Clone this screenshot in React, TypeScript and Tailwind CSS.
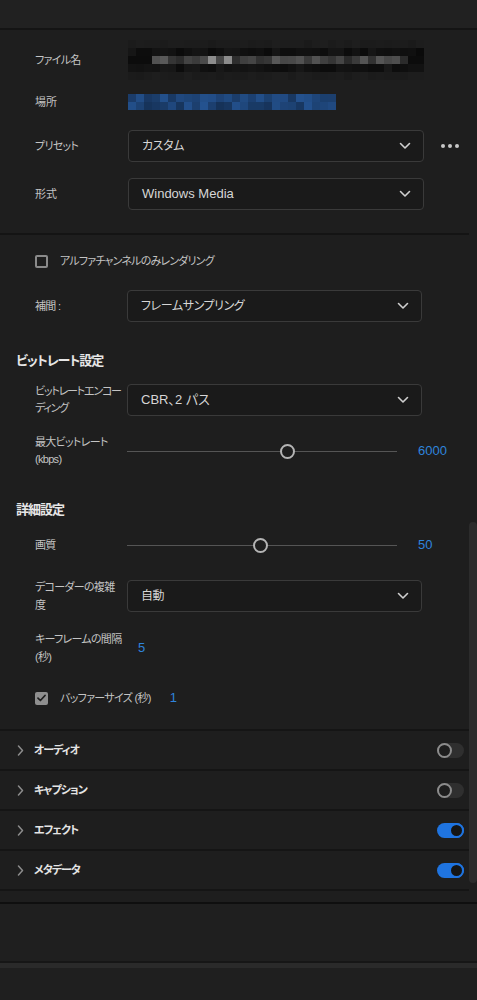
import React from "react";

const FONT = '"Liberation Sans", "Noto Sans CJK JP", sans-serif';

function noise(i: number) {
  const x = Math.sin(i * 12.9898 + 78.233) * 43758.5453;
  return x - Math.floor(x);
}

function gray(v: number) {
  const h = Math.max(0, Math.min(255, Math.round(v))).toString(16).padStart(2, "0");
  return `#${h}${h}${h}`;
}

// pixelated file name (blurred in the original)
const NAME_ROWS = [
  { base: 26, spread: 4 },
  { base: 10, spread: 12 },
  { base: 40, spread: 50 },
  { base: 12, spread: 12 },
  { base: 26, spread: 4 },
];

function NameMosaic() {
  return (
    <div className="flex flex-col w-[296px]">
      {NAME_ROWS.map((r, ri) => (
        <div key={ri} className="flex h-[8px]">
          {Array.from({ length: 37 }).map((_, ci) => {
            let v = r.base + noise(ri * 37 + ci) * r.spread;
            if (ri === 2 && (ci < 3 || ci > 34)) v = 12;
            if (ri === 2 && (ci === 10 || ci === 12)) v = 140;
            return <div key={ci} className="w-[8px] h-[8px]" style={{ background: gray(v) }} />;
          })}
        </div>
      ))}
    </div>
  );
}

function PathMosaic() {
  return (
    <div className="flex flex-col w-[208px]">
      {[0, 1].map((ri) => (
        <div key={ri} className="flex h-[8px]">
          {Array.from({ length: 26 }).map((_, ci) => {
            const n = noise(500 + ri * 26 + ci);
            const r = Math.round(22 + n * 14);
            const g = Math.round(50 + n * 32);
            const b = Math.round(88 + n * 55);
            return <div key={ci} className="w-[8px] h-[8px]" style={{ background: `rgb(${r},${g},${b})` }} />;
          })}
        </div>
      ))}
    </div>
  );
}

function ChevronDown() {
  return (
    <svg width="12" height="8" viewBox="0 0 12 8" fill="none">
      <path d="M1.5 1.5 6 6l4.5-4.5" stroke="#cfcfcf" strokeWidth="1.6" strokeLinecap="round" strokeLinejoin="round" />
    </svg>
  );
}

function ChevronRight() {
  return (
    <svg width="7" height="11" viewBox="0 0 7 11" fill="none">
      <path d="M1.5 1 5.5 5.5 1.5 10" stroke="#8c8c8c" strokeWidth="1.5" strokeLinecap="round" strokeLinejoin="round" />
    </svg>
  );
}

function Dropdown({ value, wide, jp }: { value: string; wide?: boolean; jp?: boolean }) {
  return (
    <div
      className={`flex items-center justify-between h-[32px] border border-[#3a3a3a] rounded-[4px] bg-[#1a1a1a] pl-[13px] pr-[12px] ${
        wide ? "w-[296px]" : "w-[295px]"
      }`}
    >
      <span className={`${jp ? "text-[12px] tracking-[-0.4px]" : "text-[13px]"} text-[#d6d6d6] whitespace-nowrap`}>
        {value}
      </span>
      <ChevronDown />
    </div>
  );
}

function Slider({ pct, value }: { pct: number; value: string }) {
  return (
    <div className="flex items-center">
      <div className="relative w-[270px] h-[16px] flex items-center">
        <div className="w-full h-[1px] bg-[#555555]" />
        <div
          className="absolute top-[1px] w-[15px] h-[15px] -ml-[7px] rounded-full border-2 border-[#b4b4b4] bg-[#1e1e1e]"
          style={{ left: `${pct}%` }}
        />
      </div>
      <span className="ml-[21px] text-[13px] text-[#2f84dc]">{value}</span>
    </div>
  );
}

function Checkbox({ checked }: { checked?: boolean }) {
  if (checked) {
    return (
      <div className="w-[13px] h-[13px] rounded-[2px] bg-[#8f8f8f] flex items-center justify-center">
        <svg width="9" height="8" viewBox="0 0 9 8" fill="none">
          <path d="M1 4.2 3.4 6.5 8 1.5" stroke="#1e1e1e" strokeWidth="1.7" strokeLinecap="round" strokeLinejoin="round" />
        </svg>
      </div>
    );
  }
  return <div className="w-[13px] h-[13px] rounded-[2px] border-2 border-[#8a8a8a]" />;
}

function Toggle({ on }: { on?: boolean }) {
  return on ? (
    <div className="w-[27px] h-[15px] rounded-full bg-[#1f74e0] flex items-center justify-end">
      <div className="w-[15px] h-[15px] rounded-full border-2 border-[#1f74e0] bg-[#151515]" />
    </div>
  ) : (
    <div className="w-[27px] h-[15px] rounded-full bg-[#2f2f2f] flex items-center">
      <div className="w-[15px] h-[15px] rounded-full border-2 border-[#8c8c8c] bg-[#1e1e1e]" />
    </div>
  );
}

function Label({ children, lh, tight }: { children: React.ReactNode; lh?: string; tight?: boolean }) {
  return (
    <div
      className={`pl-[35px] w-[127px] shrink-0 whitespace-nowrap text-[11px] ${
        tight ? "tracking-[-1.2px]" : "tracking-[-0.7px]"
      } text-[#c4c4c4] ${lh ?? "leading-[17px]"}`}
    >
      {children}
    </div>
  );
}

const ROWS = [
  { name: "オーディオ", on: false },
  { name: "キャプション", on: false },
  { name: "エフェクト", on: true },
  { name: "メタデータ", on: true },
];

export default function App() {
  return (
    <div
      className="w-[477px] h-[1000px] bg-[#1e1e1e] flex flex-col overflow-hidden"
      style={{ fontFamily: FONT, fontFeatureSettings: '"palt"' }}
    >
      <div className="h-[28px] bg-[#212121]" />
      <div className="h-[2px] bg-[#141414]" />

      <div className="flex h-[872px] overflow-hidden">
        <div className="w-[469px] flex flex-col">
          {/* output */}
          <div className="flex flex-col pt-[10px]">
            <div className="flex items-center h-[40px]">
              <div className="pl-[35px] w-[128px] text-[11px] tracking-[-0.7px] text-[#c4c4c4]">ファイル名</div>
              <NameMosaic />
            </div>
            <div className="flex items-center h-[20px] mt-[12px]">
              <div className="pl-[35px] w-[128px] text-[11px] text-[#c4c4c4]">場所</div>
              <PathMosaic />
            </div>
            <div className="flex items-center mt-[18px]">
              <div className="pl-[35px] w-[128px] text-[11px] tracking-[-0.7px] text-[#c4c4c4]">プリセット</div>
              <Dropdown value="カスタム" wide jp />
              <div className="ml-[17px] flex gap-[3px]">
                <div className="w-[4px] h-[4px] rounded-full bg-[#c8c8c8]" />
                <div className="w-[4px] h-[4px] rounded-full bg-[#c8c8c8]" />
                <div className="w-[4px] h-[4px] rounded-full bg-[#c8c8c8]" />
              </div>
            </div>
            <div className="flex items-center mt-[16px]">
              <div className="pl-[35px] w-[128px] text-[11px] text-[#c4c4c4]">形式</div>
              <Dropdown value="Windows Media" wide />
            </div>
          </div>
          <div className="h-[2px] bg-[#141414] mt-[23px]" />

          {/* video settings */}
          <div className="flex flex-col">
            <div className="flex items-center h-[20px] mt-[16px] pl-[35px] gap-[12px]">
              <Checkbox />
              <span className="text-[11px] tracking-[-0.8px] text-[#c4c4c4] whitespace-nowrap">
                アルファチャンネルのみレンダリング
              </span>
            </div>
            <div className="flex items-center mt-[19px]">
              <Label>補間 :</Label>
              <Dropdown value="フレームサンプリング" jp />
            </div>

            <div className="h-[20px] mt-[29px] pl-[16px] flex items-center text-[13px] tracking-[-1px] font-bold text-[#e6e6e6]">
              ビットレート設定
            </div>
            <div className="flex items-center mt-[12px] h-[34px]">
              <Label tight>
                ビットレートエンコー
                <br />
                ディング
              </Label>
              <Dropdown value="CBR、2 パス" />
            </div>
            <div className="flex items-center mt-[17px] h-[34px]">
              <Label>
                最大ビットレート
                <br />
                (kbps)
              </Label>
              <Slider pct={59.3} value="6000" />
            </div>

            <div className="h-[20px] mt-[32px] pl-[16px] flex items-center text-[13px] tracking-[-1px] font-bold text-[#e6e6e6]">
              詳細設定
            </div>
            <div className="flex items-center mt-[15px] h-[20px]">
              <Label>画質</Label>
              <Slider pct={49.3} value="50" />
            </div>
            <div className="flex items-center mt-[23px] h-[36px]">
              <Label lh="leading-[18px]">
                デコーダーの複雑
                <br />
                度
              </Label>
              <Dropdown value="自動" jp />
            </div>
            <div className="flex items-center mt-[16px] h-[36px]">
              <Label lh="leading-[18px]">
                キーフレームの間隔
                <br />
                (秒)
              </Label>
              <span className="ml-[11px] text-[13px] text-[#2f84dc]">5</span>
            </div>
            <div className="flex items-center h-[20px] mt-[22px] pl-[35px]">
              <Checkbox checked />
              <span className="ml-[12px] text-[11px] tracking-[-0.7px] text-[#c4c4c4] whitespace-nowrap">
                バッファーサイズ (秒)
              </span>
              <span className="ml-[19px] text-[13px] text-[#2f84dc]">1</span>
            </div>
          </div>
          <div className="h-[2px] bg-[#151515] mt-[21px]" />

          {/* collapsible sections */}
          {ROWS.map((r) => (
            <div key={r.name} className="flex flex-col">
              <div className="h-[38px] flex items-center pl-[17px] pr-[5px]">
                <ChevronRight />
                <span className="ml-[10px] text-[11px] tracking-[-1px] font-bold text-[#e4e4e4]">{r.name}</span>
                <div className="ml-auto">
                  <Toggle on={r.on} />
                </div>
              </div>
              <div className="h-[2px] bg-[#151515]" />
            </div>
          ))}
        </div>

        {/* scrollbar */}
        <div className="w-[8px] flex flex-col">
          <div className="mt-[492px] h-[361px] rounded-[4px] bg-[#2c2c2c]" />
        </div>
      </div>

      <div className="h-[2px] bg-[#0f0f0f]" />
      <div className="h-[57px] bg-[#1f1f1f]" />
      <div className="h-[2px] bg-[#161616]" />
      <div className="h-[5px] bg-[#2a2a2a]" />
      <div className="flex-1 bg-[#1f1f1f]" />
    </div>
  );
}
